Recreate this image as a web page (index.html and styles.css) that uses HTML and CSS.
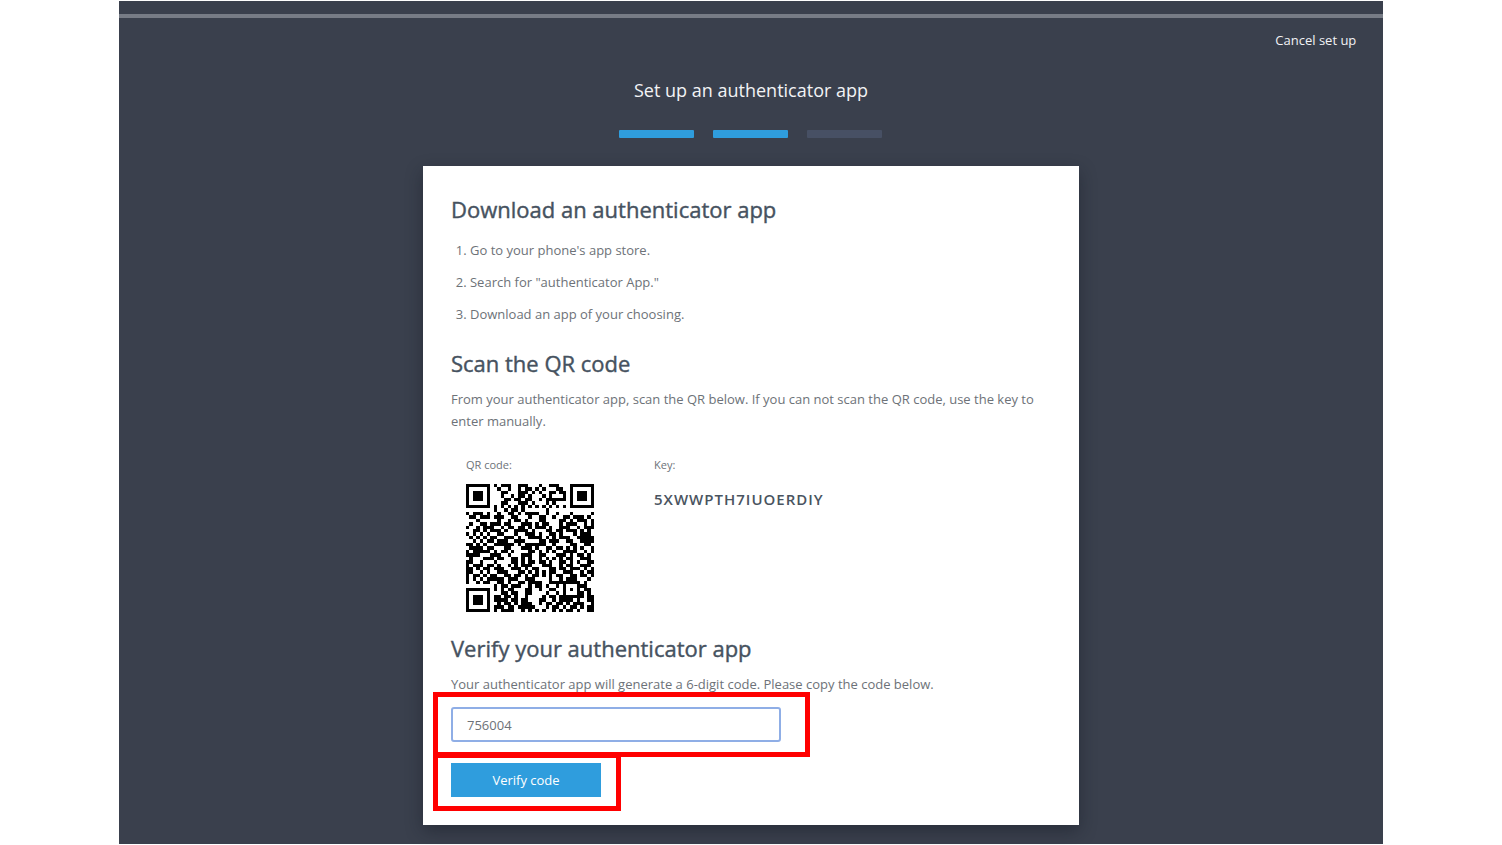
FILE: index.html
```html
<!DOCTYPE html>
<html lang="en">
<head>
<meta charset="utf-8">
<title>Set up an authenticator app</title>
<link rel="stylesheet" href="styles.css">
</head>
<body>
<div class="frame">
  <div class="topbar"></div>
  <header class="header">
    <a class="cancel" href="#">Cancel set up</a>
    <h1 class="title">Set up an authenticator app</h1>
    <div class="steps">
      <span class="step step-done"></span>
      <span class="step step-done"></span>
      <span class="step"></span>
    </div>
  </header>
  <main class="card">
    <section class="section">
      <h2 class="heading">Download an authenticator app</h2>
      <ol class="list">
        <li>Go to your phone's app store.</li>
        <li>Search for "authenticator App."</li>
        <li>Download an app of your choosing.</li>
      </ol>
    </section>
    <section class="section">
      <h2 class="heading">Scan the QR code</h2>
      <p class="text">From your authenticator app, scan the QR below. If you can not scan the QR code, use the key to enter manually.</p>
      <div class="codes">
        <div class="code-col">
          <span class="caption">QR code:</span>
          <svg class="qr" viewBox="0 0 37 37" role="img" aria-label="QR code"><path id="qr-modules"/></svg>
        </div>
        <div class="code-col">
          <span class="caption">Key:</span>
          <strong class="key">5XWWPTH7IUOERDIY</strong>
        </div>
      </div>
    </section>
    <form class="section">
      <h2 class="heading">Verify your authenticator app</h2>
      <label class="text" for="code">Your authenticator app will generate a 6-digit code. Please copy the code below.</label>
      <div class="field mark-field"><input class="input" id="code" type="text" value="756004"></div>
      <div class="field mark-button"><button class="button" type="button">Verify code</button></div>
    </form>
  </main>
</div>
<script src="qr.js"></script>
</body>
</html>
```
FILE: styles.css
```css
* { box-sizing: border-box; }
body {
  margin: 0;
  padding: 1px 0;
  background: #fff;
  color: #6d7278;
  font: 13px/22px "Open Sans", "Noto Sans", sans-serif;
}
.frame {
  width: 84.2vw;
  min-height: calc(100vh - 2px);
  margin: 0 auto;
  padding-bottom: 17px;
  background: #3a404d;
}
.topbar {
  height: 17px;
  border-bottom: 4px solid #777c86;
}
.header {
  display: flex;
  flex-direction: column;
  align-items: center;
}
.cancel {
  align-self: flex-end;
  margin: 11px 27px 0 0;
  color: #f2f3f5;
  text-decoration: none;
}
.title {
  margin: 26px 0 0;
  color: #f2f3f5;
  font-size: 18px;
  font-weight: 400;
  line-height: 26px;
}
.steps {
  display: flex;
  gap: 19px;
  margin-top: 27px;
}
.step {
  width: 75px;
  height: 8px;
  border-radius: 1px;
  background: #475064;
}
.step-done { background: #2f9ddd; }
.card {
  width: 656px;
  max-width: 100%;
  margin: 28px auto 0;
  padding: 27px 28px 28px;
  background: #fff;
  box-shadow: 0 6px 16px rgba(20, 25, 35, .45);
}
.section + .section { margin-top: 17px; }
.heading {
  margin: 0;
  color: #465260;
  font-size: 22px;
  font-weight: 400;
  line-height: 32px;
  -webkit-text-stroke: 0.4px #465260;
}
.list {
  margin: 9px 0 0;
  padding-left: 19px;
}
.list li { line-height: 32px; }
.text {
  display: block;
  margin: 9px 0 0;
}
.codes {
  display: flex;
  gap: 60px;
  margin: 22px 0 20px;
  padding-left: 15px;
}
.code-col {
  display: flex;
  flex-direction: column;
}
.caption { font-size: 11px; }
.qr {
  width: 128px;
  height: 128px;
  margin-top: 8px;
  fill: #000;
  shape-rendering: crispEdges;
}
.key {
  margin-top: 12px;
  color: #4a5460;
  font-size: 15px;
  font-weight: 600;
  letter-spacing: 1px;
}
.field {
  position: relative;
  width: fit-content;
}
.mark-field { margin-top: 12px; }
.mark-button { margin-top: 21px; }
.field::after {
  content: "";
  position: absolute;
  border: 5px solid #f00;
  pointer-events: none;
}
.mark-field::after { inset: -15px -29px -15px -18px; }
.mark-button::after { inset: -10px -20px -14px -18px; }
.input {
  display: block;
  width: 330px;
  height: 35px;
  padding: 0 14px;
  border: 2px solid #8faee6;
  border-radius: 3px;
  background: #fff;
  color: #6d7278;
  font: inherit;
  outline: none;
}
.button {
  display: block;
  width: 150px;
  height: 34px;
  padding: 0;
  border: 0;
  background: #2f9ddd;
  color: #fff;
  font: inherit;
}
```
FILE: qr.js
```js
// One string per row of modules; 1 is a dark module.
const rows = [
  "1111111010111001110001001110001111111",
  "1000001001001001011010100011001000001",
  "1011101000110001110101001101101011101",
  "1011101000100101101000101000101011101",
  "1011101000011011011001011111101011101",
  "1000001000110001110100010100001000001",
  "1111111010101010101010101010101111111",
  "0000000010010110100000010000000000000",
  "1011101001001101011110010010001000001",
  "0110111011100110001001100100110111010",
  "0001000001001011010001100001101011101",
  "0100110111011000111010110001011100101",
  "1001011100101101101011101001110010111",
  "0011010111010011110100011011011101010",
  "1010101001100010011101001101000101110",
  "0101010110011101001111010101110011111",
  "0010101101110011100001101110011001111",
  "1101010011111101011111100100001100110",
  "0111101100011000111010011011010101001",
  "1011111010110100001101010100111100101",
  "1111000111001000111001100011101011010",
  "0100011101100110101001010101011001110",
  "1100100010000110101101101001101010011",
  "1011101101001010111000111001011001110",
  "1101011011100111010110001101101110101",
  "1100101001110001101010101100111001011",
  "1011010110011011010110101011001101101",
  "1010101111101110011100001001011100010",
  "1001011001101001101111001111111110100",
  "0000000010110111001011010010100011100",
  "1111111010101100011001001100101010110",
  "1000001000110110011000010010100011010",
  "1011101011011010010000101101111111011",
  "1011101011110110110001100101111010011",
  "1011101001011010111001011011010111001",
  "1000001011101101111100010110101101011",
  "1111111010111100101010100101011010011"
];
let d = "";
rows.forEach((row, y) => {
  for (const run of row.matchAll(/1+/g)) {
    const n = run[0].length;
    d += `M${run.index} ${y}h${n}v1h-${n}z`;
  }
});
document.getElementById("qr-modules").setAttribute("d", d);
```
